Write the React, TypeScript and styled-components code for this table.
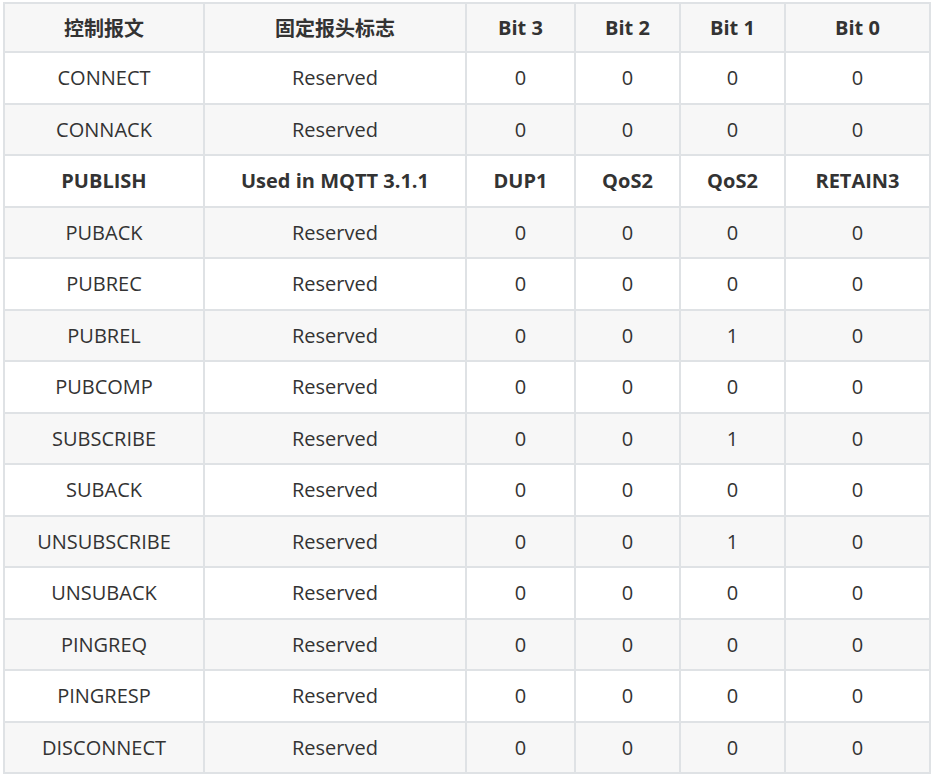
import React from "react";
import styled, { createGlobalStyle } from "styled-components";

const Global = createGlobalStyle`
  html, body { margin: 0; padding: 0; background: #ffffff; }
  body { font-family: "Open Sans", "Noto Sans CJK SC", sans-serif; color: #333333; }
`;

const Page = styled.div`
  padding: 2px 0 0 3px;
`;

const Table = styled.table`
  border-collapse: collapse;
  table-layout: fixed;
  width: 926px;
  font-size: 20px;
`;

const HeadCell = styled.th`
  height: 47px;
  padding: 0 6px;
  border: 2px solid #dfe2e5;
  background: #f7f7f7;
  font-weight: 700;
  text-align: center;
  font-family: "Open Sans", "Noto Sans CJK SC", sans-serif;
`;

const Row = styled.tr<{ $striped: boolean }>`
  background: ${(p) => (p.$striped ? "#f7f7f7" : "#ffffff")};
`;

const Cell = styled.td<{ $bold?: boolean }>`
  height: 49.5px;
  padding: 0 6px;
  border: 2px solid #dfe2e5;
  text-align: center;
  font-weight: ${(p) => (p.$bold ? 700 : 400)};
  white-space: nowrap;
`;

const widths = [200, 262, 109, 105, 105, 145];
const headers = ["控制报文", "固定报头标志", "Bit 3", "Bit 2", "Bit 1", "Bit 0"];

type R = { cells: string[]; bold?: boolean };

const rows: R[] = [
  { cells: ["CONNECT", "Reserved", "0", "0", "0", "0"] },
  { cells: ["CONNACK", "Reserved", "0", "0", "0", "0"] },
  { cells: ["PUBLISH", "Used in MQTT 3.1.1", "DUP1", "QoS2", "QoS2", "RETAIN3"], bold: true },
  { cells: ["PUBACK", "Reserved", "0", "0", "0", "0"] },
  { cells: ["PUBREC", "Reserved", "0", "0", "0", "0"] },
  { cells: ["PUBREL", "Reserved", "0", "0", "1", "0"] },
  { cells: ["PUBCOMP", "Reserved", "0", "0", "0", "0"] },
  { cells: ["SUBSCRIBE", "Reserved", "0", "0", "1", "0"] },
  { cells: ["SUBACK", "Reserved", "0", "0", "0", "0"] },
  { cells: ["UNSUBSCRIBE", "Reserved", "0", "0", "1", "0"] },
  { cells: ["UNSUBACK", "Reserved", "0", "0", "0", "0"] },
  { cells: ["PINGREQ", "Reserved", "0", "0", "0", "0"] },
  { cells: ["PINGRESP", "Reserved", "0", "0", "0", "0"] },
  { cells: ["DISCONNECT", "Reserved", "0", "0", "0", "0"] },
];

export default function App() {
  return (
    <Page>
      <Global />
      <Table>
        <colgroup>
          {widths.map((w, i) => (
            <col key={i} style={{ width: w }} />
          ))}
        </colgroup>
        <thead>
          <tr>
            {headers.map((h) => (
              <HeadCell key={h}>{h}</HeadCell>
            ))}
          </tr>
        </thead>
        <tbody>
          {rows.map((r, i) => (
            <Row key={i} $striped={i % 2 === 1}>
              {r.cells.map((c, j) => (
                <Cell key={j} $bold={r.bold}>
                  {c}
                </Cell>
              ))}
            </Row>
          ))}
        </tbody>
      </Table>
    </Page>
  );
}
